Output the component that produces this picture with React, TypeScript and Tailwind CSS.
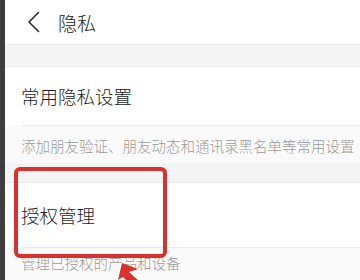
export default function App() {
  const cjk = { fontFamily: '"Noto Sans CJK SC", "Noto Sans", sans-serif' };

  return (
    <div className="relative flex h-[280px] w-[360px] overflow-hidden bg-white" style={cjk}>
      {/* dark window edge */}
      <div className="w-[5px] shrink-0 bg-[#3d3d3f]" />

      <div className="flex flex-1 flex-col">
        {/* header */}
        <div className="flex h-[44px] shrink-0 items-center bg-white pl-[22px]">
          <svg width="13" height="22" viewBox="0 0 13 22" fill="none">
            <path d="M11.5 1.5 2 11l9.5 9.5" stroke="#2a2a2a" strokeWidth="1.6" strokeLinecap="round" strokeLinejoin="round" />
          </svg>
          <span className="ml-[18px] text-[19px] font-light leading-none text-[#222]">隐私</span>
        </div>

        <div className="h-[23px] shrink-0 border-y border-[#ececec] bg-[#f5f5f5]" />

        {/* common privacy */}
        <div className="flex h-[58px] shrink-0 items-center bg-white pl-[16px]">
          <span className="text-[18.5px] font-light leading-none text-[#1c1c1c]">常用隐私设置</span>
        </div>
        <div className="ml-[16px] h-px shrink-0 bg-[#ececec]" />
        <div className="h-[37px] shrink-0 bg-[#fafafa] pl-[16px] pt-[11px] leading-none">
          <span className="whitespace-nowrap text-[14.5px] font-light leading-none text-[#9a9a9a]">
            添加朋友验证、朋友动态和通讯录黑名单等常用设置
          </span>
        </div>
        <div className="h-[20px] shrink-0 border-b border-[#ececec] bg-[#f4f4f4]" />

        {/* authorization */}
        <div className="flex h-[64px] shrink-0 items-center bg-white pl-[16px]">
          <span className="text-[18.5px] font-light leading-none text-[#1c1c1c]">授权管理</span>
        </div>
        <div className="ml-[16px] h-px shrink-0 bg-[#ececec]" />
        <div className="flex-1 bg-[#fafafa] pl-[16px] pt-[6px] leading-none">
          <span className="whitespace-nowrap text-[14.5px] font-light leading-none text-[#9a9a9a]">管理已授权的产品和设备</span>
        </div>
      </div>

      {/* annotation */}
      <div className="absolute left-[14px] top-[167px] h-[91px] w-[153px] rounded-[6px] border-[4px] border-[#d8312e]" />
      <svg className="absolute left-[112px] top-[260px]" width="36" height="20" viewBox="0 0 36 20">
        <path d="M10 3 L6 20 L11 17 L22 28 L28 22 L17 12 L26 9 Z" fill="#d8312e" />
      </svg>
    </div>
  );
}
